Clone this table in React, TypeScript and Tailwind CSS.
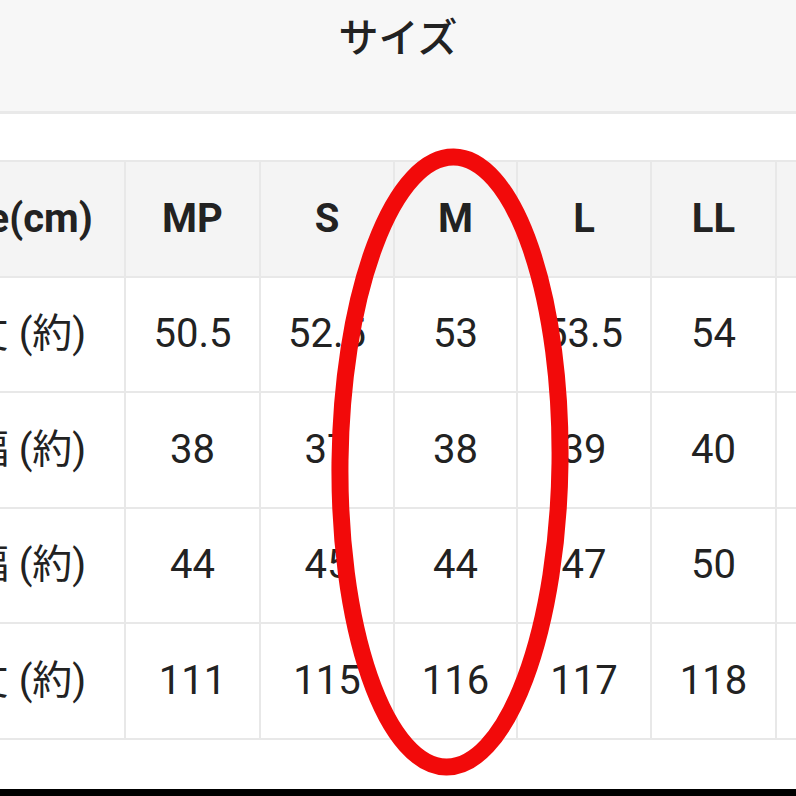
import React from 'react'

const cols = ['MP', 'S', 'M', 'L', 'LL', '']
const rows = [
  { label: '着丈 (約)', values: ['50.5', '52.5', '53', '53.5', '54', ''] },
  { label: '肩幅 (約)', values: ['38', '37', '38', '39', '40', ''] },
  { label: '身幅 (約)', values: ['44', '45', '44', '47', '50', ''] },
  { label: '総丈 (約)', values: ['111', '115', '116', '117', '118', ''] },
]

const widths = ['w-[235px]', 'w-[135px]', 'w-[134px]', 'w-[123px]', 'w-[134px]', 'w-[125px]', 'w-[120px]']

const Cell = ({ i, head, children }: { i: number; head?: boolean; children?: React.ReactNode }) => (
  <div
    className={`${widths[i]} flex h-[115.5px] shrink-0 items-center justify-center border-b-2 border-r-2 border-[#e8e8e8] ${
      head ? 'bg-[#f4f4f4] font-bold' : 'bg-white'
    }`}
  >
    {children}
  </div>
)

export default function App() {
  return (
    <div
      className="relative flex h-[796px] w-[796px] flex-col overflow-hidden bg-white text-[#222]"
      style={{ fontFamily: 'Roboto, "Noto Sans CJK JP", sans-serif' }}
    >
      <div className="flex h-[114px] shrink-0 justify-center border-b-[3px] border-[#e9e9e9] bg-[#f7f7f7] pt-[15px]">
        <p className="text-[40px] font-medium leading-none" style={{ fontFamily: '"Noto Sans CJK JP", sans-serif' }}>
          サイズ
        </p>
      </div>

      <div className="ml-[-109px] mt-[46px] flex flex-col border-t-2 border-[#e8e8e8] text-[40px] leading-none">
        <div className="flex">
          <Cell i={0} head>
            <span className="whitespace-pre pl-[10px]">Size(cm)</span>
          </Cell>
          {cols.map((c, i) => (
            <Cell key={i} i={i + 1} head>
              {c}
            </Cell>
          ))}
        </div>
        {rows.map((r) => (
          <div key={r.label} className="flex">
            <Cell i={0}>
              <span className="whitespace-pre">{r.label}</span>
            </Cell>
            {r.values.map((v, i) => (
              <Cell key={i} i={i + 1}>
                {v}
              </Cell>
            ))}
          </div>
        ))}
      </div>

      <div className="mt-auto h-[7px] shrink-0 bg-black" />

      <svg className="pointer-events-none absolute inset-0" width="796" height="796" viewBox="0 0 796 796">
        <ellipse
          cx="450"
          cy="462"
          rx="110"
          ry="305"
          fill="none"
          stroke="#f20a0a"
          strokeWidth="17"
          transform="rotate(0.7 450 462)"
        />
      </svg>
    </div>
  )
}
